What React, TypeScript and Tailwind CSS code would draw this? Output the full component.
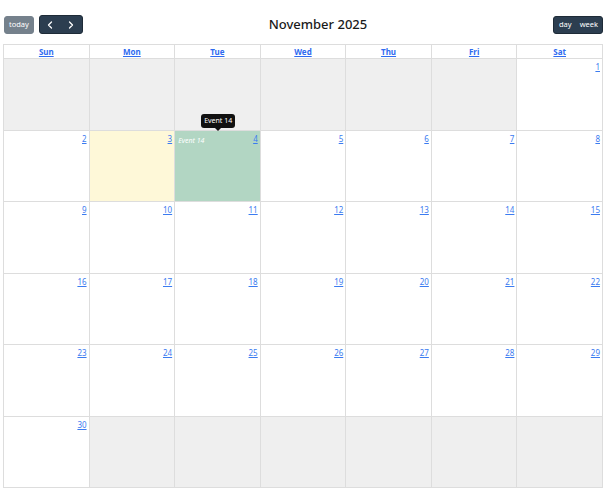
import { ChevronLeft, ChevronRight } from "lucide-react";

const dayNames = ["Sun", "Mon", "Tue", "Wed", "Thu", "Fri", "Sat"];

type Cell = { day?: number; other?: boolean };

function buildWeeks(): Cell[][] {
  const cells: Cell[] = [];
  for (let i = 0; i < 6; i++) cells.push({ other: true });
  for (let d = 1; d <= 30; d++) cells.push({ day: d });
  while (cells.length < 42) cells.push({ other: true });
  const weeks: Cell[][] = [];
  for (let i = 0; i < 42; i += 7) weeks.push(cells.slice(i, i + 7));
  return weeks;
}

function DayCell({ cell }: { cell: Cell }) {
  const isToday = cell.day === 3;
  const hasEvent = cell.day === 4;
  let bg = "bg-white";
  if (cell.other) bg = "bg-[#efefef]";
  if (isToday) bg = "bg-[#fef8d8]";
  if (hasEvent) bg = "bg-[#b2d6c3]";

  return (
    <div className={`relative h-[71.5px] border-r border-b border-[#dddddd] ${bg}`}>
      {hasEvent && (
        <>
          <span className="absolute left-[3px] top-[5px] text-[7px] italic text-white">
            Event 14
          </span>
          <div className="absolute -top-[17px] left-[26px] z-10 flex flex-col items-center">
            <div className="rounded-[3px] bg-[#111111] px-[3px] py-[2px] text-[7px] leading-[10px] text-white">
              Event 14
            </div>
            <div className="h-0 w-0 border-x-[3px] border-t-[3px] border-x-transparent border-t-[#111111]" />
          </div>
        </>
      )}
      {cell.day && (
        <div className="flex justify-end pr-[2px] pt-[3px]">
          <a
            href="#"
            className="text-[8px] leading-[10px] text-[#3b7bf0] underline"
          >
            {cell.day}
          </a>
        </div>
      )}
    </div>
  );
}

export default function App() {
  const weeks = buildWeeks();
  return (
    <div
      className="h-[500px] w-[616px] bg-white"
      style={{ fontFamily: '"Noto Sans", "Open Sans", sans-serif' }}
    >
      <div className="ml-[3px] w-[600px] pt-[15px]">
        <div className="flex h-[19px] items-center justify-between">
          <div className="flex items-center gap-[5px] pl-[1px]">
            <button className="flex h-[18px] items-center rounded-[3px] border border-[#2c3e50] bg-[#2c3e50] px-[4px] text-[7.5px] text-white opacity-65">
              today
            </button>
            <div className="flex h-[19px] items-center rounded-[3px] border border-[#1e2b37] bg-[#2c3e50] text-white">
              <span className="flex w-[21px] justify-center">
                <ChevronLeft size={12} strokeWidth={2.5} />
              </span>
              <span className="flex w-[21px] justify-center">
                <ChevronRight size={12} strokeWidth={2.5} />
              </span>
            </div>
          </div>
          <h2 className="text-[13px] font-medium text-[#1a1a1a]">
            November 2025
          </h2>
          <div className="flex h-[18px] items-center rounded-[3px] border border-[#1e2b37] bg-[#2c3e50] text-[7.5px] text-white">
            <span className="pl-[5px] pr-[4px]">day</span>
            <span className="pl-[4px] pr-[4px]">week</span>
          </div>
        </div>

        <div className="mt-[10px] border-l border-t border-[#dddddd]">
          <div className="grid grid-cols-7">
            {dayNames.map((n) => (
              <div
                key={n}
                className="flex h-[14px] items-center justify-center border-r border-b border-[#dddddd]"
              >
                <a
                  href="#"
                  className="text-[8px] font-bold leading-[10px] text-[#2f6bf0] underline"
                >
                  {n}
                </a>
              </div>
            ))}
          </div>
          {weeks.map((w, i) => (
            <div key={i} className="grid grid-cols-7">
              {w.map((c, j) => (
                <DayCell key={j} cell={c} />
              ))}
            </div>
          ))}
        </div>
      </div>
    </div>
  );
}
